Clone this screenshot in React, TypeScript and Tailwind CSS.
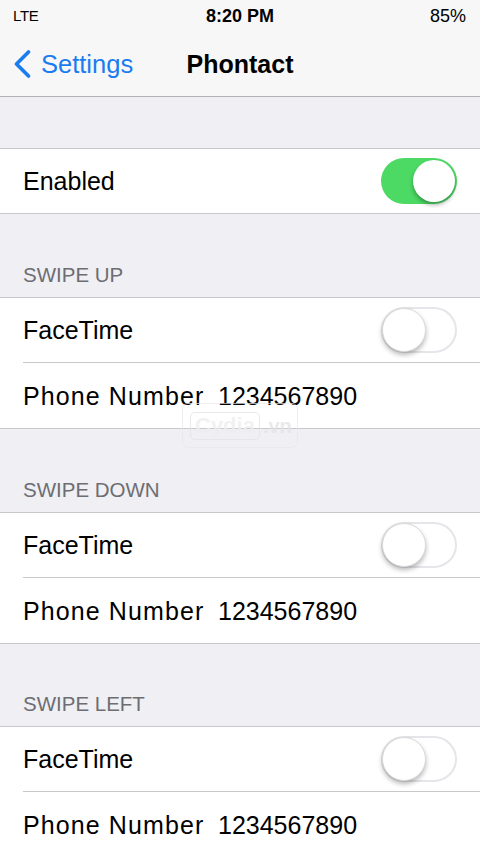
import React from "react";

function Toggle({ on }: { on: boolean }) {
  if (on) {
    return (
      <div className="relative w-[76px] h-[46px] rounded-full bg-[#4cd964] shrink-0">
        <div className="absolute right-[2px] top-[2px] w-[42px] h-[42px] rounded-full bg-white shadow-[0_3px_4px_rgba(0,0,0,0.3)]" />
      </div>
    );
  }
  return (
    <div className="relative w-[76px] h-[46px] rounded-full bg-white border-2 border-[#e5e5ea] shrink-0">
      <div className="absolute left-[-1px] top-[-1px] w-[44px] h-[44px] rounded-full bg-white border border-[#d9d9d9] shadow-[0_3px_5px_rgba(0,0,0,0.28)]" />
    </div>
  );
}

function Row({ children }: { children: React.ReactNode }) {
  return (
    <div className="h-[64px] flex items-center justify-between pl-[23px] pr-[23px] text-[25px] leading-[30px] text-black">
      {children}
    </div>
  );
}

function SectionHeader({ title, h }: { title: string; h: string }) {
  return (
    <div className={`${h} flex items-end pl-[23px] pb-[10px]`}>
      <span className="text-[20.5px] leading-[24px] text-[#6d6d72]">{title}</span>
    </div>
  );
}

function SwipeGroup() {
  return (
    <div className="bg-white border-y border-[#c8c7cc]">
      <Row>
        <span>FaceTime</span>
        <Toggle on={false} />
      </Row>
      <div className="ml-[23px] border-t border-[#c8c7cc]" />
      <div className="h-[65px] flex items-center pl-[23px] text-[25px] leading-[30px] text-black">
        <span className="w-[195px] shrink-0 tracking-[1.1px]">Phone Number</span>
        <span>1234567890</span>
      </div>
    </div>
  );
}

export default function App() {
  return (
    <div
      className="relative w-[480px] h-[852px] overflow-hidden bg-[#efeff4]"
      style={{ fontFamily: '"Liberation Sans", Arial, sans-serif' }}
    >
      <div className="bg-[#f7f7f7] border-b border-[#b2b2b2]">
        <div className="h-[32px] grid grid-cols-[1fr_auto_1fr] items-center px-[13px]">
          <span className="text-[15px] tracking-[-0.3px] text-black">LTE</span>
          <span className="text-[18px] font-semibold text-black">8:20 PM</span>
          <span className="text-[18px] text-black justify-self-end pr-[1px]">85%</span>
        </div>
        <div className="h-[64px] grid grid-cols-[1fr_auto_1fr] items-center">
          <div className="flex items-center pl-[13px] gap-[10px] text-[#1a7cf0]">
            <svg width="18" height="28" viewBox="0 0 18 28" fill="none">
              <path d="M15.5 2 L3.5 14 L15.5 26" stroke="#1a7cf0" strokeWidth="3.6" strokeLinecap="round" strokeLinejoin="round" />
            </svg>
            <span className="text-[25.5px] leading-[30px]">Settings</span>
          </div>
          <span className="text-[25px] leading-[30px] font-bold text-black">Phontact</span>
          <div />
        </div>
      </div>

      <div className="h-[51px]" />
      <div className="bg-white border-y border-[#c8c7cc]">
        <Row>
          <span>Enabled</span>
          <Toggle on={true} />
        </Row>
      </div>

      <SectionHeader title="SWIPE UP" h="h-[83px]" />
      <SwipeGroup />
      <SectionHeader title="SWIPE DOWN" h="h-[83px]" />
      <SwipeGroup />
      <SectionHeader title="SWIPE LEFT" h="h-[82px]" />
      <SwipeGroup />

      <div className="absolute left-[182px] top-[403px] w-[116px] h-[45px] rounded-[6px] border border-[#e8e8e8]/70 flex items-center pl-[7px] gap-[3px] pointer-events-none">
        <div className="h-[28px] px-[4px] rounded-[5px] border border-[#e4e4e4]/80 flex items-center">
          <span className="text-[22px] font-bold text-[#eeeeee]/80 leading-none">Cydia</span>
        </div>
        <span className="text-[20px] font-bold text-[#e4e4e4]/80 leading-none">.vn</span>
      </div>
    </div>
  );
}
